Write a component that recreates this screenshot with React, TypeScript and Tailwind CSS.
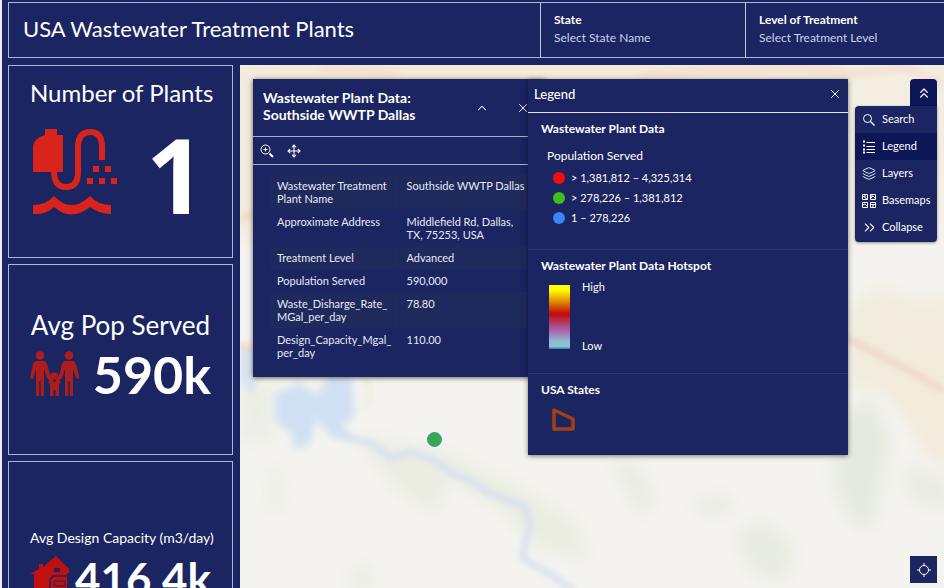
import type { ReactNode } from "react";
import { ChevronUp, X, Move, ChevronsUp, ChevronsRight, Layers } from "lucide-react";

const details = [
  ["Wastewater Treatment Plant Name", "Southside WWTP Dallas"],
  ["Approximate Address", "Middlefield Rd, Dallas, TX, 75253, USA"],
  ["Treatment Level", "Advanced"],
  ["Population Served", "590,000"],
  ["Waste_Disharge_Rate_\u200bMGal_per_day", "78.80"],
  ["Design_Capacity_Mgal_\u200bper_day", "110.00"],
];

const classes = [
  { dot: "bg-[#f80b0b]", label: "> 1,381,812 – 4,325,314" },
  { dot: "bg-[#3fbf1b]", label: "> 278,226 – 1,381,812" },
  { dot: "bg-[#3b86f3]", label: "1 – 278,226" },
];

function Basemap() {
  return (
    <svg className="absolute inset-0 h-full w-full" viewBox="240 65 704 523" preserveAspectRatio="xMinYMin slice" aria-hidden="true">
      <defs>
        <filter id="soft" x="-30%" y="-30%" width="160%" height="160%"><feGaussianBlur stdDeviation="8" /></filter>
        <filter id="fine" x="-20%" y="-20%" width="140%" height="140%"><feGaussianBlur stdDeviation="3" /></filter>
      </defs>
      <rect x="240" y="65" width="704" height="523" fill="#f4f3ef" />
      <g filter="url(#soft)">
        <path d="M230 55H960V86H230Z" fill="#f3ead8" />
        <path d="M230 55H262V245L230 235Z" fill="#f2ebdd" />
        <path d="M845 60H960V120L940 230L848 245Z" fill="#f3eee1" />
        <path d="M845 310L880 285L920 300L960 290V370L905 395L848 390Z" fill="#f1ecdd" />
        <path d="M880 385L900 365L960 360V475L925 455L905 420Z" fill="#f3ebdc" />
        <path d="M845 410L875 400L890 440L872 530L850 520L832 480Z" fill="#e6eade" />
        <path d="M735 535L765 520L795 550L785 580L755 575Z" fill="#e8ebe0" />
        <path d="M610 462L640 465L655 505L640 515Z" fill="#e9ebe3" />
        <path d="M355 435L440 450L525 490L575 520L590 560L545 552L500 510L450 480L435 515L395 490Z" fill="#ebede1" />
        <path d="M690 500L730 495L735 510L705 518Z" fill="#eaebe5" />
        <path d="M905 465L950 480V510L910 500Z" fill="#e9ebe1" />
        <path d="M240 385H272V440H240ZM268 470H282V510H268ZM352 565H372V595H352Z" fill="#ebeee4" />
      </g>
      <g filter="url(#fine)">
        <path d="M368 72H384" stroke="#f2c9bd" strokeWidth="6" />
        <path d="M320 70L400 74M640 76L720 70L800 67L850 74L905 68L944 84" fill="none" stroke="#f4dccf" strokeWidth="6" />
        <path d="M240 218L254 214M240 345L254 348" stroke="#efd1bd" strokeWidth="5" />
        <path d="M240 350H256V388L250 395L240 380Z" fill="#d8e3ef" />
        <path d="M843 336L870 350L905 368L944 391" fill="none" stroke="#f2cfc8" strokeWidth="5" />
        <path d="M275 395L298 384L318 396L330 376H350L354 415L342 425L350 440L333 437L317 418L307 446L295 447L291 431L277 423Z" fill="#cfe0f2" stroke="#dbe7f2" strokeWidth="5" />
        <path d="M342 432L356 440L372 443L390 458L410 452L436 461L453 474L470 480L487 492L510 501L525 506L530 525L522 558L552 575L575 592" fill="none" stroke="#d6dff1" strokeWidth="6" strokeLinejoin="round" />
        <path d="M365 378L371 390L365 408" fill="none" stroke="#eeeee0" strokeWidth="6" />
      </g>
    </svg>
  );
}

function TreatmentIcon() {
  return (
    <svg viewBox="0 0 86 86" className="h-[86px] w-[86px] shrink-0" aria-hidden="true">
      <g fill="#d9231b">
        <path d="M0 43V17Q1 9 12 6V0H24V6H30V43Z" />
        <path d="M0 76Q13 76 21 67Q38 85 57 67Q65 76 78 76V85Q66 85 57 78Q38 93 21 78Q13 86 0 85Z" />
        <path d="M60 37h6v6h-6zM72 37h6v6h-6zM54 49h6v6h-6zM66 49h6v6h-6zM78 49h6v6h-6z" />
      </g>
      <path d="M21 42C21 53 25 58 33 58S45 53 45 43V18C45 8 49 3 57.500 3S69 9 69 18V31" fill="none" stroke="#d9231b" strokeWidth="6" />
    </svg>
  );
}

function FamilyIcon() {
  return (
    <svg viewBox="0 0 50 46" className="h-[46px] w-[50px] shrink-0" fill="#ac1d1d" aria-hidden="true">
      <circle cx="10" cy="4.500" r="4.300" />
      <path d="M6 10H14Q16 10 17 13L20 23L24 31L22 32L17 27L14 18V45H10.700V30H9.300V45H6V18L3 28L0 27L3 13Q4 10 6 10Z" />
      <circle cx="39" cy="4.500" r="4.300" />
      <path d="M35 10H43Q45 10 46 13L49.500 27L46.500 28L43 18V45H39.700V30H38.300V45H35V18L32 27L27 32L25 31L29.500 23L32 13Q33 10 35 10Z" />
      <circle cx="24.500" cy="25" r="3.700" />
      <path d="M20 29L23 31H26L29 29L31 31L29 34V45H25.500V39H23.500V45H20V34L18 31Z" />
    </svg>
  );
}

function HouseIcon() {
  return (
    <svg viewBox="0 0 39 44" className="h-11 w-[39px] shrink-0" aria-hidden="true">
      <path d="M0 18L9 13V8H13V11L26 0L39 13V17H37V44H4V18Z" fill="#c01010" />
      <path d="M24 12h6v4h-6z" fill="#1a2561" />
      <path d="M20 44V24L23 20H39" fill="none" stroke="#1a2561" strokeWidth="1.500" />
      <path d="M24 25H35V30H24ZM24 34H36" fill="none" stroke="#1a2561" />
    </svg>
  );
}

function ZoomIcon() {
  return (
    <svg viewBox="0 0 16 16" className="h-4 w-4" fill="none" stroke="currentColor" aria-hidden="true">
      <circle cx="6.500" cy="6.500" r="4.500" /><path d="M4.500 6.500H8.500M6.500 4.500V8.500" />
      <path d="M10.500 10.500L14 14" strokeWidth="2" />
    </svg>
  );
}

function SearchIcon() {
  return (
    <svg viewBox="0 0 14 14" className="h-3.5 w-3.5" fill="none" stroke="currentColor" aria-hidden="true">
      <circle cx="5.500" cy="5.500" r="4" /><path d="M8.500 8.500L12.500 12.500" strokeWidth="1.300" />
    </svg>
  );
}

function LegendIcon() {
  return (
    <svg viewBox="0 0 14 14" className="h-3.5 w-3.5" fill="none" stroke="currentColor" aria-hidden="true">
      <path d="M4.500 2.500H13M4.500 6.500H13M4.500 9.500H13M4.500 12.500H13" />
      <path d="M1 1.500H3M1 5.500H3M1 9.500H3M1 12.500H3" strokeWidth="2" />
    </svg>
  );
}

function BasemapIcon() {
  return (
    <svg viewBox="0 0 14 14" className="h-3.5 w-3.5" fill="none" stroke="currentColor" aria-hidden="true">
      <path d="M.5.500h5v5h-5zM8.500.500h5v5h-5zM.5 8.500h5v5h-5zM8.500 8.500h5v5h-5z" />
      <path d="M1 2L5 5M3 1V3M9 4L11 2L13 4M9 2H11M1 11L3 10L5 12M9 10.500H13M11 10.500V13" />
    </svg>
  );
}

function LocateIcon() {
  return (
    <svg viewBox="0 0 16 16" className="h-4 w-4" fill="none" stroke="currentColor" aria-hidden="true">
      <circle cx="8" cy="8" r="4.500" /><path d="M8 1V4M8 12V15M1 8H4M12 8H15" />
    </svg>
  );
}

const tools: { label: string; icon: ReactNode; active?: boolean }[] = [
  { label: "Search", icon: <SearchIcon /> },
  { label: "Legend", icon: <LegendIcon />, active: true },
  { label: "Layers", icon: <Layers size={15} strokeWidth={1.5} /> },
  { label: "Basemaps", icon: <BasemapIcon /> },
  { label: "Collapse", icon: <ChevronsRight size={17} strokeWidth={1.5} className="shrink-0" /> },
];

function Filter({ id, label, value, className }: { id: string; label: string; value: string; className: string }) {
  return (
    <div className={`flex shrink-0 flex-col border-l border-[#c3cae0] pt-2 pl-[13px] ${className}`}>
      <label htmlFor={id} className="text-xs leading-[18px] font-bold">{label}</label>
      <select id={id} className="w-full appearance-none bg-transparent text-xs leading-[18px] text-[#ccd2ea]">
        <option>{value}</option>
      </select>
    </div>
  );
}

export default function App() {
  return (
    <div className="flex h-screen flex-col overflow-hidden border-l-2 border-[#e9ecf5] bg-[#1a2561] pt-0.5 pl-1.5 font-['Lato','Open_Sans',sans-serif] text-white">
      <header className="flex h-14 shrink-0 border border-r-0 border-[#aeb7d6]">
        <h1 className="min-w-0 grow truncate pt-2.5 pl-3.5 text-[22px] leading-8">USA Wastewater Treatment Plants</h1>
        <Filter id="state" label="State" value="Select State Name" className="w-[205px]" />
        <Filter id="level" label="Level of Treatment" value="Select Treatment Level" className="w-[199px]" />
      </header>

      <div className="mt-[7px] flex min-h-0 grow gap-[7px]">
        <aside className="flex w-[225px] shrink-0 flex-col gap-1.5 overflow-hidden">
          <section className="h-[193px] shrink-0 border border-[#aeb7d6] px-[21px] pt-[11px]">
            <h2 className="text-center text-2xl leading-8 whitespace-nowrap">Number of Plants</h2>
            <div className="mt-5 flex items-start gap-[27px] pl-[3px]">
              <TreatmentIcon />
              <p className="font-['Open_Sans',sans-serif] text-[104px] leading-[90px] font-bold">1</p>
            </div>
          </section>
          <section className="h-[191px] shrink-0 border border-[#aeb7d6] px-[21px] pt-11">
            <h2 className="text-center text-[26px] leading-8 whitespace-nowrap">Avg Pop Served</h2>
            <div className="mt-[3px] flex items-center justify-between">
              <FamilyIcon />
              <p className="text-[52px] leading-[60px] font-bold">590k</p>
            </div>
          </section>
          <section className="h-[191px] shrink-0 border border-[#aeb7d6] px-[21px] pt-[66px]">
            <h2 className="text-center text-sm leading-5 whitespace-nowrap">Avg Design Capacity (m3/day)</h2>
            <div className="flex items-center justify-between">
              <HouseIcon />
              <p className="text-[44px] leading-[60px] font-bold">416.4k</p>
            </div>
          </section>
        </aside>

        <main className="relative min-w-0 grow overflow-hidden">
          <Basemap />
          <button aria-label="Southside WWTP Dallas" className="absolute top-[367px] left-[187px] h-[15px] w-[15px] rounded-full border border-[#3f8fc0] bg-[#35ab48]" />

          <article className="absolute top-3.5 left-[13px] w-[292px] bg-[#1a2561] pb-[13px] shadow-[0_1px_5px_rgba(0,0,0,0.6)]">
            <header className="flex h-[58px] items-center border-b border-[#a7afd0] pl-2.5">
              <h2 className="w-[212px] pb-1 text-sm leading-[17px] font-bold">Wastewater Plant Data: Southside WWTP Dallas</h2>
              <button aria-label="Collapse popup"><ChevronUp size={14} strokeWidth={1.8} /></button>
              <button aria-label="Close popup" className="ml-[27px]"><X size={14} strokeWidth={1.6} /></button>
            </header>
            <div className="flex h-7 items-center gap-3 border-b border-[#a7afd0] pl-1.5">
              <button aria-label="Zoom to"><ZoomIcon /></button>
              <button aria-label="Pan"><Move size={14} strokeWidth={1.9} /></button>
            </div>
            <table className="mt-[9px] ml-[18px] w-64 table-fixed text-left text-[11px] leading-[13px] text-[#e6e9f4]">
              <tbody>
                {details.map(([name, value]) => (
                  <tr key={name} className="align-top odd:bg-[#1f2a5c]">
                    <th scope="row" className="border-r border-[#1c275a] py-[5px] pl-1.5 font-normal">{name}</th>
                    <td className="py-[5px] pl-[7px]">{value}</td>
                  </tr>
                ))}
              </tbody>
            </table>
          </article>

          <section className="absolute top-3.5 left-72 w-80 bg-[#1a2561] pb-[22px] shadow-[0_1px_5px_rgba(0,0,0,0.5)]">
            <header className="flex h-[34px] items-center justify-between border-b border-[#dfe3f0] pr-1.5 pb-1 pl-1.5">
              <h2 className="text-[13px] leading-5 font-medium">Legend</h2>
              <button aria-label="Close legend"><X size={14} strokeWidth={1.6} /></button>
            </header>
            <div className="h-[137px] border-b border-[#2c3871] pt-[7px] pl-[13px]">
              <h3 className="text-xs leading-[18px] font-bold">Wastewater Plant Data</h3>
              <h4 className="mt-2.5 pl-1.5 text-xs leading-[15px]">Population Served</h4>
              <ul className="mt-[5px] pl-3 text-[11px]">
                {classes.map((c) => (
                  <li key={c.label} className="flex h-5 items-center gap-1.5">
                    <span className={`h-3 w-3 rounded-full ${c.dot}`} />{c.label}
                  </li>
                ))}
              </ul>
            </div>
            <div className="h-[124px] border-b border-[#2c3871] pt-[7px] pl-[13px]">
              <h3 className="text-xs leading-[18px] font-bold">Wastewater Plant Data Hotspot</h3>
              <div className="mt-2 flex gap-3 pl-2">
                <div className="mt-0.5 h-16 w-[21px] bg-[linear-gradient(to_bottom,#ffff00_8%,#e07a00_28%,#c00a0a_45%,#a95fa8_70%,#8cbccf_88%,#8cc4d2_96%,#4a7590_100%)]" />
                <div className="-mt-1 flex h-[75px] flex-col justify-between text-[11px] leading-4">
                  <span>High</span><span>Low</span>
                </div>
              </div>
            </div>
            <div className="pt-[7px] pl-[13px]">
              <h3 className="text-xs leading-[18px] font-bold">USA States</h3>
              <svg viewBox="0 0 26 26" className="mt-2 ml-2.5 h-[26px] w-[26px]" fill="none" stroke="#a2410f" strokeWidth="3.500" strokeLinejoin="round" aria-hidden="true">
                <path d="M3 3L22 12V22H3Z" />
              </svg>
            </div>
          </section>

          <nav className="absolute top-3.5 right-[7px] flex flex-col items-end" aria-label="Map tools">
            <button aria-label="Toggle tools" className="flex h-[27px] w-[27px] items-center justify-center rounded-t bg-[#0d1758]"><ChevronsUp size={16} strokeWidth={1.8} /></button>
            <ul className="w-[82px] overflow-hidden rounded-b rounded-tl bg-[#1a2561] pb-px shadow-[0_1px_3px_rgba(0,0,0,0.4)]">
              {tools.map((t) => (
                <li key={t.label}>
                  <button className={`flex h-[27px] w-full items-center gap-1.5 pl-[7px] text-[11px] ${t.active ? "bg-[#0d1758]" : ""}`}>
                    <span className="flex w-3.5 shrink-0 justify-center">{t.icon}</span>{t.label}
                  </button>
                </li>
              ))}
            </ul>
          </nav>
          <button aria-label="Find my location" className="absolute right-[7px] bottom-[5px] flex h-[27px] w-[27px] items-center justify-center bg-[#1a2561]"><LocateIcon /></button>
        </main>
      </div>
    </div>
  );
}
